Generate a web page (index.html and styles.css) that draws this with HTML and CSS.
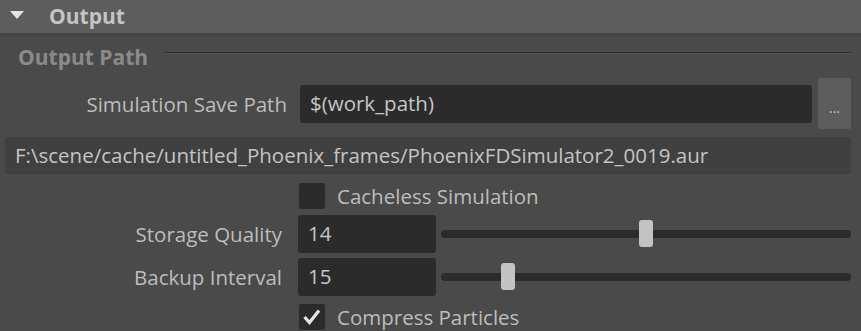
FILE: index.html
```html
<!DOCTYPE html>
<html lang="en">
<head>
  <meta charset="UTF-8">
  <meta name="viewport" content="width=device-width, initial-scale=1.0">
  <title>Output</title>
  <link rel="stylesheet" href="styles.css">
</head>
<body>
  <div class="section-header">
    <span class="arrow"></span>
    <span class="section-title">Output</span>
  </div>
  <div class="section-band"></div>

  <div class="panel">
    <div class="group-title">
      <span>Output Path</span>
      <div class="group-line"></div>
    </div>

    <div class="row row-path">
      <label class="label label-wide">Simulation Save Path</label>
      <div class="field field-wide">$(work_path)</div>
      <button class="browse">...</button>
    </div>

    <div class="path-bar">F:\scene/cache/untitled_Phoenix_frames/PhoenixFDSimulator2_0019.aur</div>

    <div class="row row-check">
      <span class="checkbox"></span>
      <span class="check-label">Cacheless Simulation</span>
    </div>

    <div class="row row-slider">
      <label class="label">Storage Quality</label>
      <div class="field field-num">14</div>
      <div class="slider">
        <div class="track"></div>
        <div class="thumb" style="left: 198px"></div>
      </div>
    </div>

    <div class="row row-slider">
      <label class="label">Backup Interval</label>
      <div class="field field-num">15</div>
      <div class="slider">
        <div class="track"></div>
        <div class="thumb" style="left: 60px"></div>
      </div>
    </div>

    <div class="row row-check row-last">
      <span class="checkbox">
        <svg width="26" height="26" viewBox="0 0 26 26"><polyline points="5.5,13 10.5,18.5 20,6.5" fill="none" stroke="#e6e6e6" stroke-width="3.2"/></svg>
      </span>
      <span class="check-label">Compress Particles</span>
    </div>
  </div>
</body>
</html>
```

FILE: styles.css
```css
body {
  margin: 0;
  background-color: #4a4a4a;
  font-family: "Open Sans", "Noto Sans", sans-serif;
  font-size: 20.5px;
  color: #bdbdbd;
  overflow: hidden;
}
.section-header {
  height: 33px;
  background-color: #5d5d5d;
  display: flex;
  align-items: center;
}
.arrow {
  width: 0;
  height: 0;
  margin-left: 10px;
  border-left: 7.5px solid transparent;
  border-right: 7.5px solid transparent;
  border-top: 8px solid #e4e4e4;
  margin-top: -3px;
}
.section-title {
  margin-left: 25px;
  font-weight: bold;
  font-size: 21px;
  color: #c4c4c4;
  margin-top: -1px;
}
.section-band {
  height: 4px;
  background-color: #444;
}
.panel {
  padding: 0 10px 0 0;
}
.group-title {
  height: 40px;
  display: flex;
  align-items: center;
  padding-left: 18px;
  font-weight: bold;
  font-size: 21px;
  color: #8a8a8a;
}
.group-title span {
  margin-top: -1px;
}
.group-line {
  flex: 1;
  margin-left: 16px;
  margin-top: -8px;
  height: 1px;
  background-color: #2b2b2b;
  border-bottom: 1px solid #575757;
}
.row {
  display: flex;
  align-items: center;
}
.row-path {
  height: 51px;
  margin-top: 1px;
}
.label {
  width: 282px;
  text-align: right;
  flex-shrink: 0;
}
.label-wide {
  width: 287px;
  margin-right: 13px;
}
.field {
  background-color: #2b2b2b;
  border-radius: 3px;
  height: 38px;
  line-height: 37px;
  padding-left: 10px;
  box-sizing: border-box;
  color: #c6c6c6;
}
.field-wide {
  flex: 1;
}
.browse {
  width: 33px;
  height: 51px;
  margin-left: 6px;
  background-color: #5d5d5d;
  border: none;
  border-radius: 2px;
  color: #c8c8c8;
  font-family: inherit;
  font-size: 14px;
  padding: 8px 0 0;
}
.path-bar {
  margin: 8px 0 0 5px;
  height: 37px;
  line-height: 36px;
  background-color: #404040;
  border-radius: 2px;
  padding-left: 10px;
  color: #c4c4c4;
}
.row-check {
  height: 26px;
  margin-top: 9px;
  padding-left: 299px;
}
.row-last {
  margin-top: 8px;
}
.checkbox {
  width: 26px;
  height: 26px;
  background-color: #2b2b2b;
  border-radius: 2px;
  flex-shrink: 0;
}
.checkbox svg {
  display: block;
}
.check-label {
  margin-left: 12px;
}
.row-slider {
  height: 38px;
  margin-top: 6px;
}
.row-slider + .row-slider {
  margin-top: 5px;
}
.row-slider .label {
  margin-right: 16px;
}
.field-num {
  width: 138px;
  flex-shrink: 0;
}
.slider {
  flex: 1;
  margin-left: 5px;
  height: 28px;
  position: relative;
  display: flex;
  align-items: center;
}
.track {
  flex: 1;
  height: 8px;
  border-radius: 4px;
  background-color: #2b2b2b;
}
.thumb {
  position: absolute;
  top: 0;
  width: 14px;
  height: 27px;
  border-radius: 3px;
  background-color: #c3c3c3;
}
```
